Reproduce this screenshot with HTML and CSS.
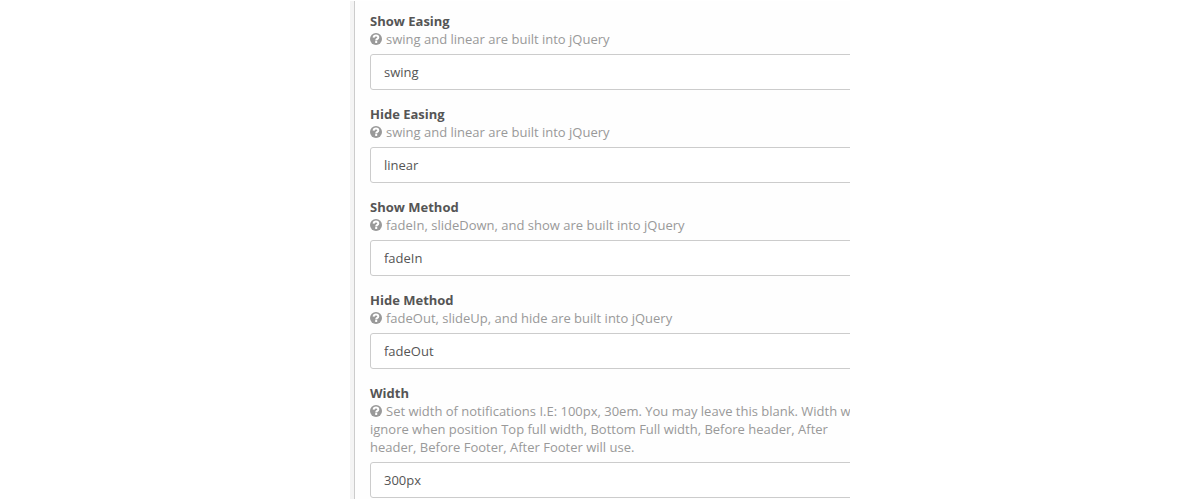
FILE: index.html
```
<!DOCTYPE html>
<html lang="en">

<head>
  <meta charset="UTF-8">
  <meta name="viewport" content="width=device-width, initial-scale=1.0">
  <title>Notification Settings</title>
  <link rel="stylesheet" href="styles.css">
</head>

<body>
  <!-- Shared help icon -->
  <svg class="sprite" aria-hidden="true">
    <symbol id="help" viewBox="0 0 12 12">
      <circle cx="6" cy="6" r="6" fill="currentColor" />
      <path d="M3.6 4.6C3.8 3.2 4.8 2.6 6 2.6c1.300 0 2.300.8 2.300 1.900C8.300 5.900 6.200 5.800 6.200 7.400" fill="none" stroke="#fff" stroke-width="2" />
      <rect x="5.200" y="8" width="2" height="2" fill="#fff" />
    </symbol>
  </svg>

  <main class="panel">
    <form class="settings">
      <div class="field">
        <label for="show-easing">Show Easing</label>
        <p class="help" id="show-easing-help"><svg class="icon"><use href="#help" /></svg>swing and linear are built into jQuery</p>
        <input type="text" id="show-easing" value="swing" aria-describedby="show-easing-help">
      </div>
      <div class="field">
        <label for="hide-easing">Hide Easing</label>
        <p class="help" id="hide-easing-help"><svg class="icon"><use href="#help" /></svg>swing and linear are built into jQuery</p>
        <input type="text" id="hide-easing" value="linear" aria-describedby="hide-easing-help">
      </div>
      <div class="field">
        <label for="show-method">Show Method</label>
        <p class="help" id="show-method-help"><svg class="icon"><use href="#help" /></svg>fadeIn, slideDown, and show are built into jQuery</p>
        <input type="text" id="show-method" value="fadeIn" aria-describedby="show-method-help">
      </div>
      <div class="field">
        <label for="hide-method">Hide Method</label>
        <p class="help" id="hide-method-help"><svg class="icon"><use href="#help" /></svg>fadeOut, slideUp, and hide are built into jQuery</p>
        <input type="text" id="hide-method" value="fadeOut" aria-describedby="hide-method-help">
      </div>
      <div class="field">
        <label for="width">Width</label>
        <p class="help" id="width-help"><svg class="icon"><use href="#help" /></svg>Set width of notifications I.E: 100px, 30em. You may leave this blank. Width will ignore when position Top full width, Bottom Full width, Before header, After header, Before Footer, After Footer will use.</p>
        <input type="text" id="width" value="300px" aria-describedby="width-help">
      </div>
    </form>
  </main>
</body>

</html>
```
FILE: styles.css
```
* {
  box-sizing: border-box;
}

body {
  margin: 0;
  background: #fff;
  color: #555;
  font: 13px/18px "Open Sans", sans-serif;
}

.sprite {
  display: none;
}

.panel {
  max-width: 500px;
  margin: 1px auto 0;
  overflow: hidden;
  border-left: 4px solid #f4f4f4;
}

/* The form runs on past the right edge of the panel */
.settings {
  margin-right: -20px;
  padding: 11px 0 1px 15px;
  border-left: 1px solid #ccc;
  background: #fefefe;
}

.field + .field {
  margin-top: 15px;
}

.field label {
  display: block;
  font-weight: 700;
}

.help {
  margin: 0 0 6px;
  color: #999;
}

.icon {
  width: 12px;
  height: 12px;
  margin-right: 4px;
  vertical-align: -1px;
}

.field input {
  display: block;
  width: 100%;
  height: 36px;
  padding: 0 13px;
  border: 1px solid #ccc;
  border-radius: 3px;
  background: #fff;
  color: #555;
  font: inherit;
}
```
